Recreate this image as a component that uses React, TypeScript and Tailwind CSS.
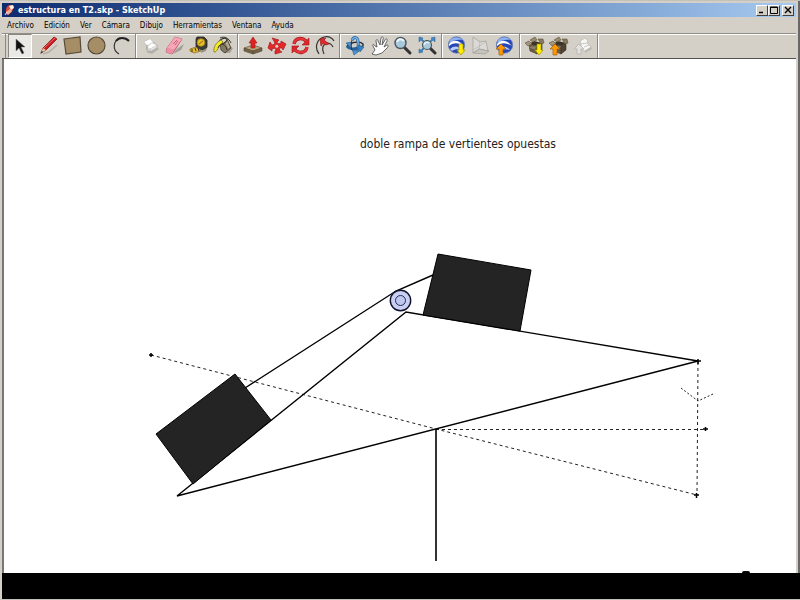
import type { FC, ReactNode } from 'react';

type Tool = { name: string; art: ReactNode };

const menus = ['Archivo', 'Edición', 'Ver', 'Cámara', 'Dibujo', 'Herramientas', 'Ventana', 'Ayuda'];

const Globe: FC = () => (
  <>
    <circle cx="9.5" cy="9" r="8.2" fill="#2546b8" stroke="#6d7fb0" strokeWidth=".8" />
    <path d="M3 4C7 0 13 1 16 4C11 3 7 4 2 7Z" fill="#8fb0ee" />
    <path d="M2 8C6 3 12 4 17 10C12 7 7 6 2 10Z" fill="#fff" />
    <path d="M3 13C7 9 12 10 15 14C11 13 8 13 5 15Z" fill="#b9cbf5" />
  </>
);

const Box: FC = () => (
  <>
    <path d="M4 8L12 10V18L5 15Z" fill="#6b5c45" stroke="#4a4030" strokeWidth=".6" />
    <path d="M12 10L17 7V14L12 18Z" fill="#4e4333" stroke="#3a3226" strokeWidth=".6" />
    <path d="M4 8L9 5L17 7L12 10Z" fill="#3b3326" />
    <path d="M5 4L10 1L12 4L8 6Z" fill="#9a8a6d" stroke="#5d523f" strokeWidth=".6" />
    <path d="M13 3L18 3L19 7L16 8Z" fill="#8a7a5e" stroke="#5d523f" strokeWidth=".6" />
    <path d="M0 7L4 5L7 8L3 10Z" fill="#a39577" stroke="#5d523f" strokeWidth=".6" />
    <path d="M6 10L12 10L10 14L4 12Z" fill="#8f8064" stroke="#5d523f" strokeWidth=".6" />
  </>
);

const DownArrow: FC = () => (
  <path d="M12 8H16V14H18L14 19L10 14H12Z" fill="#ffee00" stroke="#a99300" strokeWidth=".7" />
);

const UpArrow: FC = () => (
  <path d="M4 19V13H1L6 8L11 13H8V19Z" fill="#ff9900" stroke="#9b5e14" strokeWidth=".7" />
);

const drawTools: Tool[] = [
  {
    name: 'Línea',
    art: (
      <>
        <path d="M4 18L10 16L18 9" fill="none" stroke="#b3afa6" strokeWidth="1.5" />
        <path d="M2 17L4 12L15 1L18 3L7 14Z" fill="#cf1720" stroke="#7e1016" strokeWidth=".7" />
        <path d="M5 12L16 2" stroke="#f26a69" />
        <path d="M2 17L4 12L7 14Z" fill="#e5c89c" />
        <path d="M1 18L3 15L4 16Z" fill="#222" />
      </>
    ),
  },
  { name: 'Rectángulo', art: <path d="M1 3L17 1L18 16L3 18Z" fill="#a58d65" stroke="#574b38" strokeWidth="1.2" /> },
  { name: 'Círculo', art: <circle cx="9.5" cy="9.5" r="8.5" fill="#a58d65" stroke="#574b38" strokeWidth="1.2" /> },
  {
    name: 'Arco',
    art: (
      <>
        <path d="M8 18C1 14 2 5 9 2" fill="none" stroke="#333" strokeWidth="1.2" />
        <path d="M5 5C8 1 14 1 18 5" fill="none" stroke="#222" strokeWidth="2" />
      </>
    ),
  },
];

const editTools: Tool[] = [
  {
    name: 'Crear componente',
    art: (
      <>
        <path d="M5 16L11 18L18 13L15 11Z" fill="#b5b1a9" />
        <path d="M3 6L9 3L12 6L16 9V12L9 16L6 14V10Z" fill="#e4e3e1" stroke="#a5a29c" strokeWidth=".7" />
        <path d="M3 6L9 3L12 6L6 9Z" fill="#fff" />
        <path d="M6 11L11 7L16 9L9 13Z" fill="#fff" stroke="#bbb" strokeWidth=".5" />
        <path d="M6 9V14M9 13V16" stroke="#999" strokeWidth=".7" />
      </>
    ),
  },
  {
    name: 'Borrar',
    art: (
      <>
        <path d="M8 18L16 14L19 8L12 13Z" fill="#a39c96" />
        <path d="M2 12L10 1L17 3L10 14L7 18L1 16Z" fill="#e0708a" stroke="#a84d61" strokeWidth=".7" />
        <path d="M2 12L10 1L17 3L9 14Z" fill="#f7a6b6" />
        <path d="M1 16L2 12L9 14L7 18Z" fill="#ef8fa3" />
        <path d="M8 8L12 4M10 9L13 5" stroke="#c8637c" />
      </>
    ),
  },
  {
    name: 'Medir',
    art: (
      <>
        <path d="M8 1H15L18 4V11L15 15L7 11V3Z" fill="#3c3a36" stroke="#24221f" strokeWidth=".8" />
        <circle cx="12" cy="6.5" r="3.8" fill="#e9bf22" stroke="#a6841b" strokeWidth=".8" />
        <path d="M10 8L14 5" stroke="#7e671b" />
        <path d="M7 11L12 15L5 17L1 15V13Z" fill="#e8bc24" stroke="#77622c" strokeWidth=".7" />
        <path d="M3 13V16M6 12L7 15M9 12L10 15" stroke="#333" />
        <path d="M12 15L18 12L17 15L12 17Z" fill="#99958b" />
      </>
    ),
  },
  {
    name: 'Pintar',
    art: (
      <>
        <path d="M10 17L17 17L20 12L15 10Z" fill="#a5a197" />
        <path d="M7 6L14 3L18 12L12 17L8 14Z" fill="#857a61" stroke="#3d382d" strokeWidth=".8" />
        <path d="M13 5L16 12" stroke="#b8ae94" strokeWidth="2" />
        <ellipse cx="10" cy="5" rx="4" ry="2.2" fill="#ddd7bd" stroke="#35322a" transform="rotate(-28 10 5)" />
        <path d="M8 4C3 6 0 12 1 16C4 17 5 10 10 6Z" fill="#f2e81f" stroke="#6d691e" strokeWidth=".7" />
        <path d="M5 12C7 6 13 8 14 14M7 2C11 0 16 2 18 7" fill="none" stroke="#333" />
      </>
    ),
  },
];

const modifyTools: Tool[] = [
  {
    name: 'Empujar/tirar',
    art: (
      <>
        <path d="M1 12L10 9L19 12L10 15Z" fill="#b7a47d" stroke="#655b46" strokeWidth=".7" />
        <path d="M1 12V15L10 18V15ZM10 15V18L19 15V12Z" fill="#736448" stroke="#51462f" strokeWidth=".6" />
        <path d="M8 12V7H6L10 1L14 7H12V12Z" fill="#e22222" stroke="#9b1919" strokeWidth=".6" />
      </>
    ),
  },
  {
    name: 'Mover',
    art: (
      <>
        <path d="M5 2L12 4L10 6L11 8L14 7V5L19 8L16 14L15 12L12 12L13 15L15 16L8 18L8 15L9 14L8 12L5 13L5 15L1 12L3 6L5 9L8 8L7 5Z" fill="#e42828" stroke="#a41a20" strokeWidth=".7" strokeLinejoin="round" />
        <circle cx="9.8" cy="10.2" r="1.5" fill="#d4d0c8" />
      </>
    ),
  },
  {
    name: 'Girar',
    art: (
      <>
        <path d="M3 8C4 2 11 1 15 5" fill="none" stroke="#a41a20" strokeWidth="3.4" />
        <path d="M16 11C15 17 8 18 4 14" fill="none" stroke="#a41a20" strokeWidth="3.4" />
        <path d="M18 2V9H11Z M1 17V10H8Z" fill="#df252a" stroke="#a41a20" strokeWidth=".6" />
        <path d="M3 8C4 2 11 1 15 5M16 11C15 17 8 18 4 14" fill="none" stroke="#e93338" strokeWidth="2.2" />
      </>
    ),
  },
  {
    name: 'Equidistancia',
    art: (
      <>
        <path d="M4 18C-1 11 2 3 9 1C13 0 17 2 19 5" fill="none" stroke="#333" strokeWidth="1.2" />
        <path d="M9 18C6 13 8 8 12 7C15 7 17 9 18 11" fill="none" stroke="#333" strokeWidth="1.2" />
        <path d="M5 3L11 2L9 4L14 8L11 9L8 7L6 10Z" fill="#e32629" stroke="#9e1b20" strokeWidth=".7" />
      </>
    ),
  },
];

const cameraTools: Tool[] = [
  {
    name: 'Orbitar',
    art: (
      <>
        <path d="M2 11C2 7 15 4 18 8C19 10 15 12 12 12" fill="none" stroke="#2a2f36" strokeWidth="1.3" />
        <path d="M7 4C9 0 13 1 13 6C14 11 12 15 11 16" fill="none" stroke="#2d5e92" strokeWidth="3" />
        <path d="M7 4C9 0 13 1 13 6C14 11 12 15 11 16" fill="none" stroke="#6fb2ec" strokeWidth="1.6" />
        <path d="M7 13L14 15L9 19Z" fill="#4b94d6" stroke="#285477" strokeWidth=".6" />
        <path d="M2 10C5 14 9 13 13 12" fill="none" stroke="#24629f" strokeWidth="3" />
        <path d="M13 9L19 11L15 16Z" fill="#3584d0" stroke="#285477" strokeWidth=".6" />
        <path d="M1 7L7 6L5 11Z" fill="#4b94d6" stroke="#285477" strokeWidth=".6" />
        <path d="M7 4C6 8 6 11 7 14" fill="none" stroke="#2a2f36" />
      </>
    ),
  },
  {
    name: 'Desplazar',
    art: (
      <path d="M3 18L6 14L4 10C3 8 5 8 6 10L8 11L7 5C7 3 9 3 9 5L11 9L12 2C13 0 15 1 14 3L13 9L16 4C17 2 19 3 18 5L15 11L18 9C20 9 19 11 18 12L13 17L7 19Z" fill="#fff" stroke="#454545" strokeWidth=".8" />
    ),
  },
  {
    name: 'Zoom',
    art: (
      <>
        <path d="M11 11L17 17" stroke="#333" strokeWidth="3" strokeLinecap="round" />
        <circle cx="7.5" cy="7" r="5.5" fill="#a7c9db" stroke="#4c565c" strokeWidth="1.4" />
        <path d="M4 6C5 3 8 2 11 5" fill="none" stroke="#ecf6fa" strokeWidth="2" />
      </>
    ),
  },
  {
    name: 'Ver modelo centrado',
    art: (
      <>
        <path d="M2 1L6 2L5 3L7 5L6 6L4 4L2 6ZM18 1L14 2L15 3L13 5L14 6L16 4L18 6ZM2 17L2 13L4 14L6 12L7 13L5 15L6 16Z" fill="#3d86c6" stroke="#326fa3" strokeWidth=".6" />
        <path d="M13 12L18 17" stroke="#333" strokeWidth="3" strokeLinecap="round" />
        <circle cx="10" cy="9" r="4.5" fill="#a7c9db" stroke="#4c565c" strokeWidth="1.2" />
        <path d="M7 9C8 6 10 6 12 7" fill="none" stroke="#e6f2f8" strokeWidth="1.4" />
      </>
    ),
  },
];

const earthTools: Tool[] = [
  { name: 'Obtener vista actual', art: <><Globe /><DownArrow /></> },
  {
    name: 'Activar terreno',
    art: (
      <>
        <path d="M2 1L9 6L15 5L17 15L8 13L2 17Z" fill="#dcdad6" stroke="#a5a29c" strokeWidth=".8" />
        <path d="M2 17L8 13L18 15L14 18Z" fill="#c6c3bc" stroke="#9d9a94" strokeWidth=".7" />
        <path d="M9 6L8 13M2 14L15 6" fill="none" stroke="#bcb9b3" strokeWidth=".8" />
      </>
    ),
  },
  { name: 'Colocar modelo', art: <><Globe /><UpArrow /></> },
];

const warehouseTools: Tool[] = [
  { name: 'Obtener modelos', art: <><Box /><DownArrow /></> },
  { name: 'Compartir modelo', art: <><Box /><UpArrow /></> },
  {
    name: 'Compartir componente',
    art: (
      <>
        <path d="M7 5L12 2L15 5L14 7L18 11L12 15L8 13V8Z" fill="#f6f6f5" stroke="#b9b6b0" strokeWidth=".7" />
        <path d="M8 8L14 7M11 11L16 9" fill="none" stroke="#bbb8b1" strokeWidth=".7" />
        <path d="M12 17L19 13L18 11L12 15Z" fill="#bbb8b1" />
        <path d="M4 18V13H1L6 8L11 13H8V18Z" fill="#e2e1df" stroke="#b3b0aa" strokeWidth=".7" />
      </>
    ),
  },
];

const groups = [drawTools, editTools, modifyTools, cameraTools, earthTools, warehouseTools];

const ToolGroup: FC<{ tools: Tool[] }> = ({ tools }) => (
  <div className="flex items-center">
    {tools.map((tool) => (
      <button key={tool.name} type="button" aria-label={tool.name} className="flex h-6 w-6 items-center justify-center">
        <svg viewBox="0 0 20 20" className="h-5 w-5" aria-hidden="true">{tool.art}</svg>
      </button>
    ))}
    <span className="mx-0.5 h-6 w-0.5 border-l border-r border-l-[#8b8882] border-r-white" />
  </div>
);

const WindowButton: FC<{ label: string; children: ReactNode }> = ({ label, children }) => (
  <button
    type="button"
    aria-label={label}
    className="flex h-[11px] w-3 items-center justify-center border border-t-white border-l-white border-r-[#404040] border-b-[#404040] bg-[#d4d0c8]"
  >
    <svg viewBox="0 0 8 8" className="h-2 w-2 shrink-0" fill="none" stroke="#000" aria-hidden="true">{children}</svg>
  </button>
);

const Scene: FC = () => (
  <svg
    viewBox="4 59 792 513"
    preserveAspectRatio="xMinYMin meet"
    className="block h-full w-full"
    role="img"
    aria-label="Estructura de doble rampa"
  >
    <text x="360" y="148" fontSize="12" fill="#222" className="font-['DejaVu_Sans_Condensed','DejaVu_Sans',sans-serif]">
      doble rampa de vertientes opuestas
    </text>

    {/* guide lines */}
    <g fill="none" stroke="#222" strokeWidth="1" strokeDasharray="3 3">
      <path d="M151 355L436 429L697 495" />
      <path d="M436 429.5H705" />
      <path d="M698 362L697 495" />
      <path d="M681 388L698 401L713 394" strokeDasharray="2 2" />
    </g>

    {/* ramp, rope and post */}
    <g fill="none" stroke="#000" strokeWidth="1.4">
      <path d="M177 496L406 312L698 361Z" />
      <path d="M245 388L396 291L433 275" />
      <path d="M436 429V561" strokeWidth="1.6" />
    </g>

    {/* weights */}
    <path d="M438 254L531 270L520 331L423 315Z" fill="#242424" stroke="#000" />
    <path d="M156 434L235 374L271 420L193 484Z" fill="#242424" stroke="#000" />

    {/* pulley */}
    <circle cx="400.5" cy="300.5" r="10.2" fill="#c9cff2" stroke="#10132b" strokeWidth="1.4" />
    <circle cx="400.5" cy="300.5" r="5" fill="#c0c7ef" stroke="#252b58" />

    <g stroke="#000" strokeWidth="1.5">
      <path d="M149 355H153M151 353V357" />
      <path d="M696 361H701M698 359V364" />
      <path d="M703 429H708M705.5 427V431" />
      <path d="M694 495H699M696.5 493V498" />
    </g>
  </svg>
);

const App: FC = () => (
  <div className="flex h-screen flex-col border-t border-b border-[#c4c1ba] bg-[#d4d0c8] font-['DejaVu_Sans_Condensed','DejaVu_Sans',sans-serif] text-black">
    <div className="flex min-h-0 flex-1 flex-col border-r-2 border-[#686868] pt-0.5 pl-0.5 pr-0.5">
      {/* Title bar */}
      <header className="flex h-3.5 shrink-0 items-center bg-linear-to-r from-[#0e2b70] to-[#a6caf0] px-0.5">
        <svg viewBox="0 0 12 12" className="mr-0.5 h-3 w-3" aria-hidden="true">
          <path d="M2 6C2 1 7 0 10 2L8 8L4 11L2 10Z" fill="#d94c36" />
          <path d="M5 2L9 1L10 4L7 6Z" fill="#fff1e8" />
          <path d="M2 8L6 5L8 7L4 11Z" fill="#efb297" />
          <path d="M1 11L3 8" stroke="#eee" />
        </svg>
        <h1 className="flex-1 text-[9px] leading-3 font-bold text-white">estructura en T2.skp - SketchUp</h1>
        <div className="flex">
          <WindowButton label="Minimizar"><path d="M1 6.5H5" strokeWidth="1.5" /></WindowButton>
          <WindowButton label="Maximizar"><path d="M.5 1H7.5V7.5H.5Z M.5 1.5H7.5" /></WindowButton>
          <span className="w-0.5" />
          <WindowButton label="Cerrar"><path d="M1 1L7 7M7 1L1 7" strokeWidth="1.4" /></WindowButton>
        </div>
      </header>

      {/* Menu bar */}
      <nav className="flex h-4 shrink-0 items-end gap-2.5 pl-[5px] text-[8px] leading-[14px]">
        {menus.map((menu) => (
          <button key={menu} type="button">{menu}</button>
        ))}
      </nav>

      {/* Toolbar */}
      <div className="flex h-[26px] shrink-0 items-center border-t border-b border-t-[#908d87] border-b-[#55534f] pl-[3px] shadow-[inset_0_1px_0_#fff]">
        <span className="mr-0.5 h-6 w-px bg-[#8b8882]" />
        <button type="button" aria-label="Seleccionar" className="mr-[5px] flex h-6 w-6 items-center justify-center border border-t-[#8b8882] border-l-[#8b8882] border-r-white border-b-white bg-[#ebe9e5]">
          <svg viewBox="0 0 20 20" className="h-5 w-5 shrink-0" aria-hidden="true">
            <path d="M6 3V15L9 12L12 18L14 17L11 11H15Z" fill="#111" stroke="#777" strokeWidth=".5" />
          </svg>
        </button>
        {groups.map((tools) => (
          <ToolGroup key={tools[0].name} tools={tools} />
        ))}
      </div>

      {/* Drawing area */}
      <main className="min-h-0 flex-1 border-l-2 border-[#777] bg-white">
        <Scene />
      </main>
    </div>

    <footer className="relative ml-0.5 h-[26px] shrink-0 bg-black">
      <span className="absolute -top-0.5 right-[50px] h-0.5 w-2 rounded-t-full bg-black" />
    </footer>
  </div>
);

export default App;
